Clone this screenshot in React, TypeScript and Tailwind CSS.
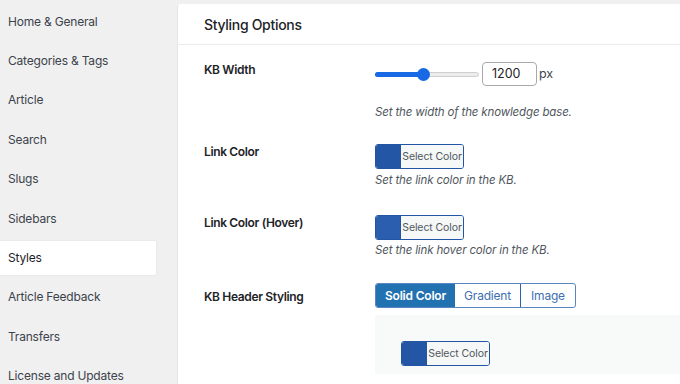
import React from 'react';

const navItems = [
  'Home & General',
  'Categories & Tags',
  'Article',
  'Search',
  'Slugs',
  'Sidebars',
  'Styles',
  'Article Feedback',
  'Transfers',
  'License and Updates',
];

const ColorPicker = ({ color }: { color: string }) => (
  <div className="flex h-[25px] w-[89px] overflow-hidden rounded-[3px] border border-[#2255a4]">
    <div className="w-[24px] shrink-0" style={{ backgroundColor: color }} />
    <div className="flex flex-1 items-center justify-center whitespace-nowrap border-l border-[#2255a4] bg-[#f6f7f7] text-[10.5px] tracking-[-0.1px] text-[#50575e]">
      Select Color
    </div>
  </div>
);

const Help = ({ children }: { children: React.ReactNode }) => (
  <p className="text-[11.5px] italic leading-4 tracking-[-0.15px] text-[#50575e]">{children}</p>
);

const Label = ({ children, className = '' }: { children: React.ReactNode; className?: string }) => (
  <div className={`w-[171px] shrink-0 text-[12px] font-semibold leading-4 tracking-[-0.35px] ${className}`}>
    {children}
  </div>
);

export default function App() {
  return (
    <div
      className="flex h-[384px] w-[680px] overflow-hidden bg-[#f0f0f1] text-[#1d2327]"
      style={{ fontFamily: 'Inter, "Liberation Sans", sans-serif' }}
    >
      {/* Menu de secciones */}
      <aside className="w-[177px] shrink-0 pt-[2px]">
        {navItems.map((item) => (
          <div key={item} className="flex h-[39.4px] items-center">
            <div
              className={`flex h-[34px] w-[156px] items-center px-2 text-[12px] tracking-[-0.2px] ${
                item === 'Styles' ? 'bg-white text-[#1d2327] shadow-[0_0_2px_rgba(0,0,0,0.08)]' : 'text-[#3c434a]'
              }`}
            >
              {item}
            </div>
          </div>
        ))}
      </aside>

      {/* Panel principal */}
      <main className="mt-1 flex-1 rounded-tl-[3px] border-l border-[#e6e6e8] bg-white">
        <div className="flex h-[41px] items-center border-b border-[#ececed] pl-[26px] pt-[1px] text-[14px] font-medium tracking-[-0.3px]">
          Styling Options
        </div>

        <div className="pl-[26px] pt-[17px]">
          {/* KB Width */}
          <div className="flex">
            <Label>KB Width</Label>
            <div>
              <div className="flex h-[24px] items-center">
                <div className="relative h-[5px] w-[104px] rounded-full border border-[#cfcfd1] bg-[#ececec]">
                  <div className="absolute -left-px -top-px h-[5px] w-[49px] rounded-full bg-[#1769e6]" />
                  <div className="absolute left-[41px] top-[-5px] h-[13px] w-[13px] rounded-full bg-[#1769e6]" />
                </div>
                <div className="ml-[3px] flex h-[24px] w-[55px] items-center rounded-[4px] border border-[#a7aaad] pl-[9px] text-[12.5px]">
                  1200
                </div>
                <span className="ml-[2px] text-[12.5px] text-[#3c434a]">px</span>
              </div>
              <div className="mt-[18px]">
                <Help>Set the width of the knowledge base.</Help>
              </div>
            </div>
          </div>

          {/* Link Color */}
          <div className="mt-[24px] flex">
            <Label>Link Color</Label>
            <div>
              <ColorPicker color="#2456a6" />
              <div className="mt-[3px]">
                <Help>Set the link color in the KB.</Help>
              </div>
            </div>
          </div>

          {/* Link Color (Hover) */}
          <div className="mt-[27px] flex">
            <Label>Link Color (Hover)</Label>
            <div>
              <ColorPicker color="#2b5eaf" />
              <div className="mt-[2px]">
                <Help>Set the link hover color in the KB.</Help>
              </div>
            </div>
          </div>

          {/* KB Header Styling */}
          <div className="mt-[25px] flex">
            <Label className="pt-[6px]">KB Header Styling</Label>
            <div className="flex-1">
              <div className="flex h-[25px] w-[201px] overflow-hidden rounded-[3px] border border-[#5b86c4] text-[12px] tracking-[-0.2px]">
                <div className="flex w-[79px] items-center justify-center bg-[#2271b1] font-semibold text-white">
                  Solid Color
                </div>
                <div className="flex w-[66px] items-center justify-center border-r border-[#2c63ad] text-[#3d6fb0]">
                  Gradient
                </div>
                <div className="flex flex-1 items-center justify-center text-[#3d6fb0]">Image</div>
              </div>
              <div className="mt-[7px] h-[59px] bg-[#f8f9f9] pl-[26px] pt-[26px]">
                <ColorPicker color="#2456a6" />
              </div>
            </div>
          </div>
        </div>
      </main>
    </div>
  );
}
